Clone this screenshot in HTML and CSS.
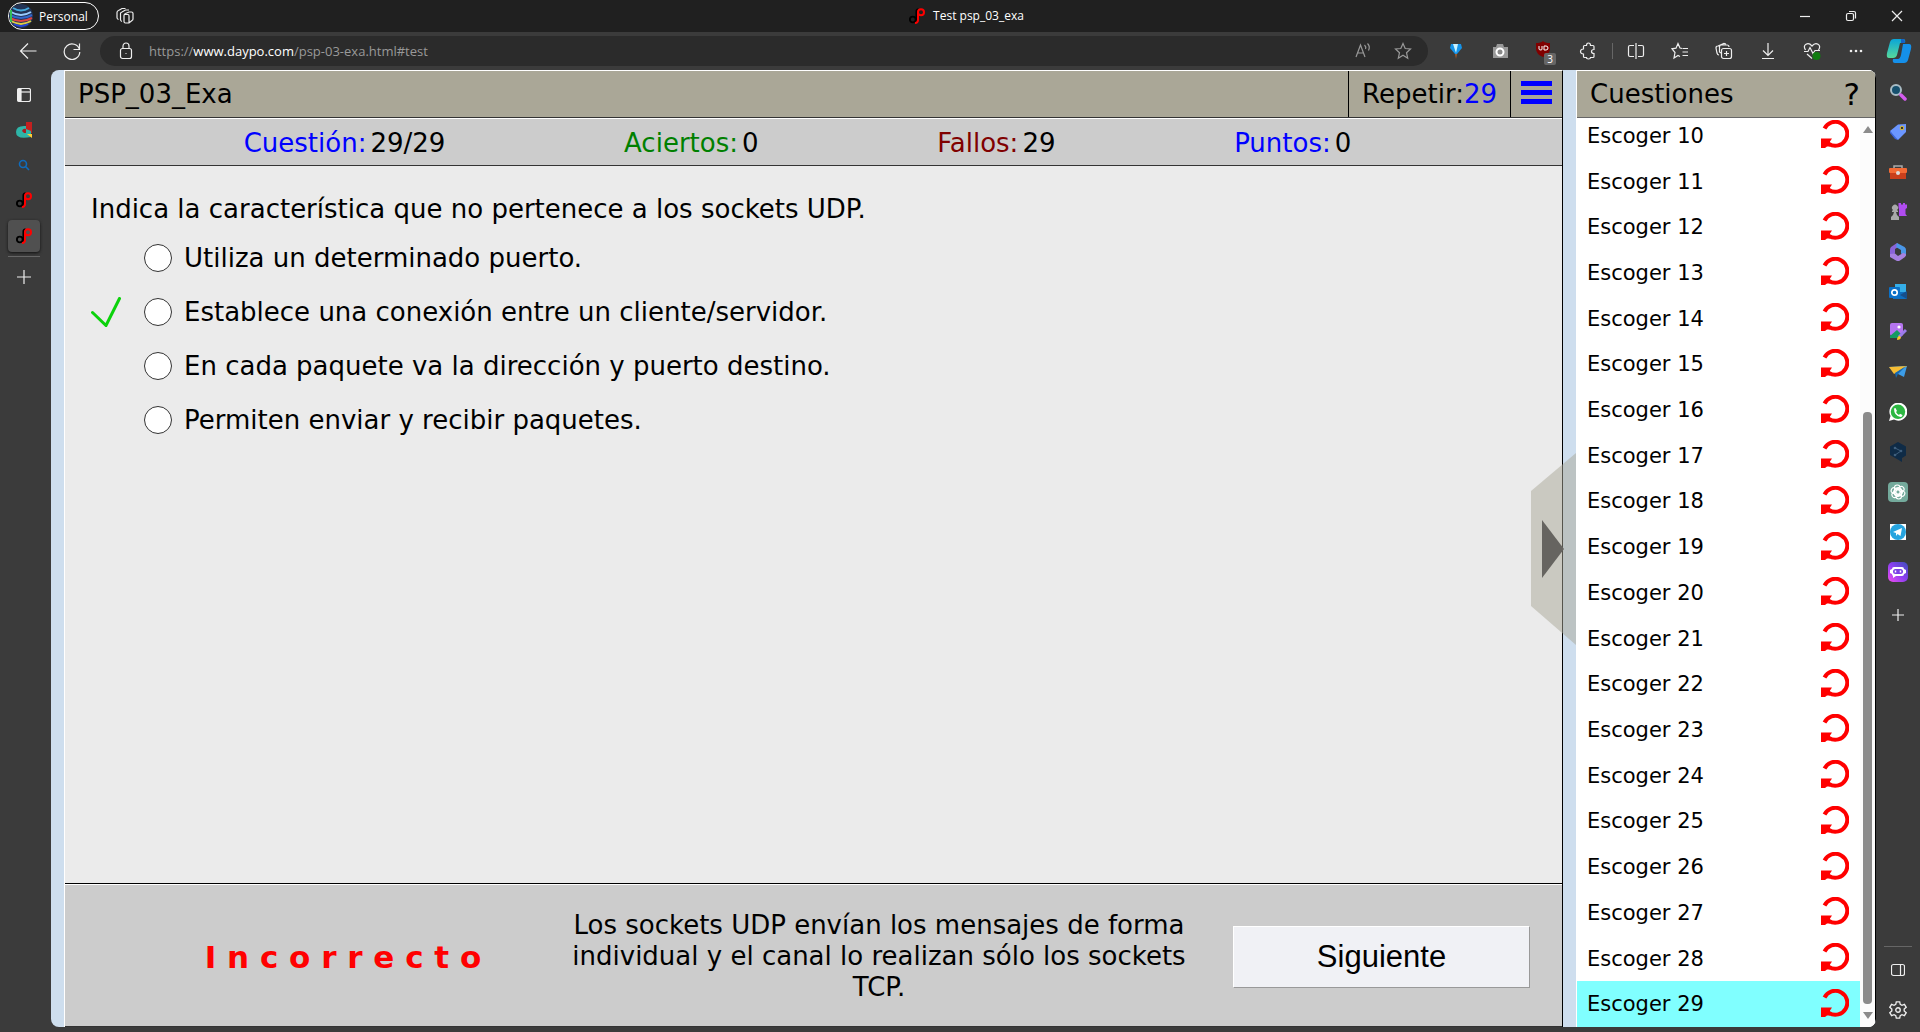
FILE: index.html
```html
<!DOCTYPE html>
<html lang="es">
<head>
<meta charset="utf-8">
<title>Test psp_03_exa</title>
<link rel="stylesheet" href="styles.css">
</head>
<body>
<svg class="sprite" aria-hidden="true">
  <symbol id="daypo" viewBox="0 0 16 16"><circle cx="3.800" cy="11.500" r="2.900" fill="none" stroke="#000" stroke-width="1.900"/><path d="M7.200 14V4Q7 1.500 9.500 1" fill="none" stroke="#000" stroke-width="1.500"/><circle cx="12" cy="4.200" r="3" fill="none" stroke="red" stroke-width="2"/><path d="M9 3.500V12q0 2.500-3 3.200" fill="none" stroke="red" stroke-width="2"/></symbol>
  <symbol id="retry" viewBox="0 0 28 28"><path d="M3.500 8.500A12 12 0 1 1 8 24" fill="none" stroke="red" stroke-width="4"/><path d="M0 18.500h11l-2 3v5H6l-2 1.500H0z" fill="red"/></symbol>
</svg>
<div class="window">
  <header class="titlebar">
    <button class="profile"><svg class="avatar" viewBox="0 0 24 24" aria-hidden="true"><circle cx="12" cy="12" r="12" fill="#235"/><g fill="none" stroke-width="2"><path d="M4 4q8 5 16 0" stroke="#4ad"/><path d="M2 8q10 6 20 0" stroke="#9cf"/><path d="M1 11q11 6 22 0" stroke="#36c"/><path d="M1 14q11 6 22 0" stroke="#d44"/><path d="M2 17q10 6 20 0" stroke="#dc4"/><path d="M5 20q7 4 14 0" stroke="#24d"/><path d="M2 6v12" stroke="#3b5"/></g></svg>Personal</button>
    <button class="icon" aria-label="Áreas de trabajo"><svg width="18" height="18" viewBox="0 0 18 18"><path d="M8 8.500Q8 7 9.500 6.500L13 5h2.500q1.500 0 1.500 1.500V12q0 1-1 1.500l-3 2.500H9.500Q8 16 8 14.500zM8.500 7.500H12q1 0 1 1.500v6.500M6 14.500Q4.500 14 4.500 12.500V6.500Q4.500 5.500 6 5L9.500 3H13M2.500 12.500Q1 12 1 10.500V5.500Q1 4 2.500 3.500L6 1.500H9.500"/></svg></button>
    <div class="tab-title"><svg width="16" height="16" aria-hidden="true"><use href="#daypo"/></svg>Test psp_03_exa</div>
    <div class="window-controls">
      <button class="icon" aria-label="Minimizar"><svg width="12" height="12" viewBox="0 0 12 12"><path d="M1 6.500h10"/></svg></button>
      <button class="icon" aria-label="Restaurar"><svg width="12" height="12" viewBox="0 0 12 12"><rect x="1.500" y="3.500" width="7" height="7" rx="1.500"/><path d="M4 1.500h5q1.500 0 1.500 1.500v5.500"/></svg></button>
      <button class="icon" aria-label="Cerrar"><svg width="12" height="12" viewBox="0 0 12 12"><path d="m1 1 10 10M11 1 1 11"/></svg></button>
    </div>
  </header>

  <nav class="toolbar">
    <div class="nav-buttons">
      <button class="icon" aria-label="Atrás"><svg width="18" height="18" viewBox="0 0 18 18"><path d="M17.500 9H1.500M9 1.500 1.500 9 9 16.500"/></svg></button>
      <button class="icon" aria-label="Actualizar"><svg width="18" height="18" viewBox="0 0 18 18"><path d="M16.500 7.500a7.800 7.800 0 1 0 .3 2.500M16.500 1.500v6h-6"/></svg></button>
    </div>
    <div class="address">
      <svg class="line" width="14" height="18" viewBox="0 0 14 18" aria-hidden="true"><rect x="1.500" y="6.500" width="11" height="10" rx="2"/><path d="M4 6.500V4a3 3 0 0 1 6 0v2.500M6.500 11.500h1"/></svg>
      <a class="url" href="#test">https://<b>www.daypo.com</b>/psp-03-exa.html#test</a>
      <button class="icon dim" aria-label="Leer en voz alta"><svg width="18" height="18" viewBox="0 0 18 18"><path d="m2 15 4.500-12L11 15M3.500 11h6M10.500 3q2 2 1 4M13.500 1.500q3 3 1 7"/></svg></button>
      <button class="icon dim" aria-label="Favorito"><svg width="18" height="18" viewBox="0 0 18 18"><path d="m9 1.500 2.200 5 5.300.5-4 3.700 1.200 5.500L9 13.300l-4.700 2.900 1.200-5.500-4-3.700 5.300-.5z"/></svg></button>
    </div>
    <div class="extensions">
      <button class="icon" aria-label="Extensión"><svg class="art" width="18" height="18" viewBox="0 0 18 18"><path d="M4 2h10l1 4-5 6H8L3 6z" fill="#1593e8"/><path d="M6 2h5l-2 9z" fill="#c9f2ff"/><path d="m8 12 1 5 1-5z" fill="#a65a26"/></svg></button>
      <button class="icon" aria-label="Captura"><svg class="art" width="18" height="18" viewBox="0 0 18 18"><path d="M2 5h3l1-3h6l1 3h4v11H2z" fill="#999"/><circle cx="9" cy="10" r="3.500" fill="#888" stroke="#fff" stroke-width="2"/></svg></button>
      <button class="icon" aria-label="uBlock"><svg class="art" width="22" height="22" viewBox="0 0 22 22"><path d="M3 3q5 0 7-2 2 2 7 2v6q0 5-7 8-7-3-7-8z" fill="#800000"/><path d="M6 6v3q0 1 2 1 1 0 1-1V6m2 4V6h2q2 0 2 2t-2 2z" fill="none" stroke="#fff"/></svg><span class="badge">3</span></button>
      <button class="icon" aria-label="Extensiones"><svg width="18" height="18" viewBox="0 0 18 18"><path d="M5.500 3.500H7.500Q7.500 1 9.500 1t2 2.500H14q1 0 1 1v3q-2.500 0-2.500 2t2.500 2v3q0 1-1 1H11.500Q11.500 17 9.500 17t-2-1.500h-2q-1 0-1-1V12Q1.500 12 1.500 9.500t3-2.500V4.500q0-1 1-1z"/></svg></button>
      <span class="divider"></span>
      <button class="icon" aria-label="Pantalla dividida"><svg width="18" height="18" viewBox="0 0 18 18"><path d="M7 3.500H3q-1.500 0-1.500 1.500v8q0 1.500 1.500 1.500h4M11 3.500h4q1.500 0 1.500 1.500v8q0 1.500-1.500 1.500h-4M9 1v16"/></svg></button>
      <button class="icon" aria-label="Favoritos"><svg width="18" height="18" viewBox="0 0 18 18"><path d="M11 6.500 9 6 7 1.500 5 6.200 1 6.800l3 3.700-1 5.500 4-2.500 2 1M11.500 6.500H17M11.500 10H17M11.500 13.500H17"/></svg></button>
      <button class="icon" aria-label="Colecciones"><svg width="18" height="18" viewBox="0 0 18 18"><rect x="6.500" y="6.500" width="10" height="10" rx="2"/><path d="M11.500 9v5M9 11.500h5M4 13Q2.500 13 2 11L1 6q0-2 2-2M6 11l-1.500-1V5q0-2 2-2H12q2 0 2 2M3 4l6-2.500 2 .5"/></svg></button>
      <button class="icon" aria-label="Descargas"><svg width="18" height="18" viewBox="0 0 18 18"><path d="M9 1v12M4 8.500 9 13.500l5-5M3 16.500h12"/></svg></button>
      <button class="icon" aria-label="Rendimiento"><svg width="18" height="18" viewBox="0 0 18 18"><path d="M2.500 8Q0 4 3 2.300T9 4q3-3.500 6-1.700T15.500 8M1 9.500h4l2-4 3 6 2-3h5M4 12l5 4.500"/><circle class="solid" cx="13.500" cy="14" r="4" fill="#107c10" stroke="none"/></svg></button>
      <button class="icon" aria-label="Más"><svg class="art" width="18" height="18" viewBox="0 0 18 18" fill="#eee"><circle cx="4" cy="9" r="1.300"/><circle cx="9" cy="9" r="1.300"/><circle cx="14" cy="9" r="1.300"/></svg></button>
    </div>
    <button class="icon copilot" aria-label="Copilot"><svg class="art" width="26" height="26" viewBox="0 0 26 26"><defs><linearGradient id="cp" x1="0" y1="0" x2="0" y2="1"><stop stop-color="#0aa5d8"/><stop offset="1" stop-color="#57d99a"/></linearGradient></defs><path d="M8 1h9q3 0 2 4l-5 0-3 12q-1 3-4 3H3q-3 0-2-5L4 4q1-3 4-3z" fill="url(#cp)"/><path d="M17 6h6q3 0 2 5l-3 11q-1 3-4 3H9q-3 0-2-4h5q2 0 3-4z" fill="#1590ea"/><path d="M15 1h2q2 0 2 4h-4z" fill="#1460c8"/></svg></button>
  </nav>

  <div class="workspace">
    <aside class="rail tabs">
      <button class="icon" aria-label="Pestañas"><svg width="14" height="14" viewBox="0 0 14 14"><rect x=".5" y=".5" width="13" height="13" rx="2"/><path d="M.500 4h13"/><path d="M1 1h3v12H1z" fill="#eee"/></svg></button>
      <button class="icon" aria-label="Pestaña"><svg class="art" width="16" height="16" viewBox="0 0 16 16"><path d="M10 0h6v11h-6z" fill="#c3201f"/><path d="M0 10q0-6 8-6h2v3l5 2v6q-15 3-15-5z" fill="#2eb5a8"/><path d="M6 9q1-3 4-2v4H8z" fill="#a81d20"/><path d="M11 12h5v4z" fill="#fc3"/></svg></button>
      <button class="icon" aria-label="Búsqueda"><svg class="art" width="12" height="12" viewBox="0 0 12 12"><g fill="none" stroke="#0f6cbd" stroke-width="1.600"><circle cx="5" cy="5" r="3.500"/><path d="m7.500 7.500 3.500 3.500"/></g></svg></button>
      <button class="icon" aria-label="Daypo"><svg class="art" width="16" height="16"><use href="#daypo"/></svg></button>
      <button class="icon active" aria-label="Test psp_03_exa"><svg class="art" width="16" height="16"><use href="#daypo"/></svg></button>
      <span class="rule"></span>
      <button class="icon" aria-label="Nueva pestaña"><svg width="14" height="14" viewBox="0 0 14 14"><path d="M7 0v14M0 7h14"/></svg></button>
    </aside>

    <div class="page">
      <main class="test">
        <header class="test-head">
          <h1>PSP_03_Exa</h1>
          <div class="repeat">Repetir:<a href="#repetir">29</a></div>
          <button class="menu" aria-label="Menú"><span></span><span></span><span></span></button>
        </header>
        <div class="stats">
          <div class="stat blue">Cuestión:<b>29/29</b></div>
          <div class="stat green">Aciertos:<b>0</b></div>
          <div class="stat maroon">Fallos:<b>29</b></div>
          <div class="stat blue">Puntos:<b>0</b></div>
        </div>
        <section class="question">
          <h2>Indica la característica que no pertenece a los sockets UDP.</h2>
          <div class="option"><span class="mark"></span><input type="radio" name="r" id="r1"><label for="r1">Utiliza un determinado puerto.</label></div>
          <div class="option"><span class="mark"><svg width="30" height="30" viewBox="0 0 30 30" aria-label="Correcta"><path d="M1.500 15.500 15 28.500 28.500 1.500" fill="none" stroke="#0bd20b" stroke-width="3" stroke-linecap="round"/></svg></span><input type="radio" name="r" id="r2"><label for="r2">Establece una conexión entre un cliente/servidor.</label></div>
          <div class="option"><span class="mark"></span><input type="radio" name="r" id="r3"><label for="r3">En cada paquete va la dirección y puerto destino.</label></div>
          <div class="option"><span class="mark"></span><input type="radio" name="r" id="r4"><label for="r4">Permiten enviar y recibir paquetes.</label></div>
        </section>
        <footer class="result">
          <strong>I n c o r r e c t o</strong>
          <p>Los sockets UDP envían los mensajes de forma individual y el canal lo realizan sólo los sockets TCP.</p>
          <button class="next">Siguiente</button>
        </footer>
      </main>
      <div class="gutter">
        <button class="collapse" aria-label="Ocultar cuestiones"><svg width="45" height="192" viewBox="0 0 45 192"><path d="M0 38 45 0v192L0 153z" fill="#aaa797" fill-opacity=".5"/><path d="M11 67v58l22-29z" fill="#666460"/></svg></button>
      </div>
      <aside class="questions">
        <header class="questions-head"><h2>Cuestiones</h2><a href="#ayuda">?</a></header>
        <div class="list-area">
          <ol>
            <li>Escoger 10<svg><use href="#retry"/></svg></li>
            <li>Escoger 11<svg><use href="#retry"/></svg></li>
            <li>Escoger 12<svg><use href="#retry"/></svg></li>
            <li>Escoger 13<svg><use href="#retry"/></svg></li>
            <li>Escoger 14<svg><use href="#retry"/></svg></li>
            <li>Escoger 15<svg><use href="#retry"/></svg></li>
            <li>Escoger 16<svg><use href="#retry"/></svg></li>
            <li>Escoger 17<svg><use href="#retry"/></svg></li>
            <li>Escoger 18<svg><use href="#retry"/></svg></li>
            <li>Escoger 19<svg><use href="#retry"/></svg></li>
            <li>Escoger 20<svg><use href="#retry"/></svg></li>
            <li>Escoger 21<svg><use href="#retry"/></svg></li>
            <li>Escoger 22<svg><use href="#retry"/></svg></li>
            <li>Escoger 23<svg><use href="#retry"/></svg></li>
            <li>Escoger 24<svg><use href="#retry"/></svg></li>
            <li>Escoger 25<svg><use href="#retry"/></svg></li>
            <li>Escoger 26<svg><use href="#retry"/></svg></li>
            <li>Escoger 27<svg><use href="#retry"/></svg></li>
            <li>Escoger 28<svg><use href="#retry"/></svg></li>
            <li class="current">Escoger 29<svg><use href="#retry"/></svg></li>
          </ol>
          <div class="scrollbar" aria-hidden="true"><i class="up"></i><span class="track"></span><span class="thumb"></span><i class="down"></i></div>
        </div>
      </aside>
    </div>

    <aside class="rail apps">
      <button class="icon" aria-label="Buscar"><svg class="art" width="18" height="18" viewBox="0 0 18 18"><circle cx="7" cy="7" r="5" fill="#16506e" stroke="#a9bcc5" stroke-width="2"/><path d="m12 12 4 4" stroke="#d55cf0" stroke-width="3.500" stroke-linecap="round"/></svg></button>
      <button class="icon" aria-label="Compras"><svg class="art" width="18" height="18" viewBox="0 0 18 18"><path d="M1 8 9 1.500 17 1v8L9 17 6 15z" fill="#6b96ff"/><path d="m1 8 8 9-3-1-5-6z" fill="#3d64d8"/><circle cx="13" cy="5" r="1.800" fill="#333" stroke="#e6c229"/></svg></button>
      <button class="icon" aria-label="Herramientas"><svg class="art" width="18" height="18" viewBox="0 0 18 18"><path d="M5 6V3h8v3" fill="none" stroke="#aaa" stroke-width="1.500"/><rect y="5" width="18" height="5" rx="1" fill="#f36a35"/><path d="M1 10h16v6H1z" fill="#c93f1c"/><circle cx="9" cy="10" r="2" fill="#ddd"/></svg></button>
      <button class="icon" aria-label="Juegos"><svg class="art" width="18" height="18" viewBox="0 0 18 18"><path d="M9.500 0H12v1.500h2V0h2v1.500h2V5l-1.500 1v5L18 13h-8V6L9.500 5z" fill="#b04cf0"/><path d="M2 17v-3l2-2 1-3H3V8l1-1a3 3 0 1 1 4 0l1 1v1H7l1 3 2 2v3z" fill="#a9a9a9"/></svg></button>
      <button class="icon" aria-label="Microsoft 365"><svg class="art" width="18" height="18" viewBox="0 0 18 18"><path d="M8 0 2 4Q1 5 1 7v6l5-2.500V6l5-3z" fill="#8a63d8"/><path d="m8 0 7.500 4Q17 5 17 7v6l-5-2.500V7L7 4z" fill="#4a97e8"/><path d="M17 11q0 2-1 3l-5 3.500q-2 1-4 0L1 14v-3l5-.500 3 2.500 5-3z" fill="#a781e0"/></svg></button>
      <button class="icon" aria-label="Outlook"><svg class="art" width="18" height="18" viewBox="0 0 18 18"><path d="M6 1h11v9H6z" fill="#35aee8"/><path d="M4 9h14v7H4z" fill="#0f6fc0"/><path d="m11 12 7-4v8z" fill="#164f8b"/><rect y="4" width="11" height="11" rx="1" fill="#0b71c8"/><circle cx="5.500" cy="9.500" r="2.700" fill="none" stroke="#fff" stroke-width="1.700"/></svg></button>
      <button class="icon" aria-label="Imágenes"><svg class="art" width="18" height="18" viewBox="0 0 18 18"><rect x="1" width="13" height="13" rx="2" fill="#b575f0"/><circle cx="10" cy="4" r="1.600" fill="#fff"/><path d="m1 13 7-6 5 5-4 3H1z" fill="#169b61"/><path d="m17 7-7 7" stroke="#9b7bea" stroke-width="3"/><path d="M8 17q0-4 3-4l1 2q-1 2-4 2z" fill="#ffc928"/></svg></button>
      <button class="icon" aria-label="Drop"><svg class="art" width="18" height="18" viewBox="0 0 18 18"><path d="m0 4 18-1-3 11-6-3z" fill="#3c9de8"/><path d="m0 4 18-1L5 11z" fill="#f6bd34"/><path d="m6 10 11-7-8 8-2 4z" fill="#1768b0"/></svg></button>
      <button class="icon" aria-label="WhatsApp"><svg class="art" width="18" height="18" viewBox="0 0 18 18"><path d="M0 18 1.500 13A9 9 0 1 1 5 16.500z" fill="#fff"/><circle cx="9" cy="8.800" r="7.200" fill="#2cb742"/><path d="M5 5.500 6.500 5 8 8l-1 1q1 2 3 3l1-1.200 2.500 1.200q0 2-2 2Q5 13 5 5.500z" fill="#fff"/></svg></button>
      <button class="icon" aria-label="DeepL"><svg class="art" width="18" height="20" viewBox="0 0 18 20"><path d="m9 0 8 4.500v9L13 16v4l-5-3-7-4V4.500z" fill="#0f2b46"/><path d="m6 6 6 3-6 4" fill="none" stroke="#3f5f7d"/><g fill="#3f5f7d"><circle cx="6" cy="6" r="1.300"/><circle cx="12" cy="9" r="1.300"/><circle cx="6" cy="13" r="1.300"/></g></svg></button>
      <button class="icon" aria-label="ChatGPT"><svg class="art" width="20" height="20" viewBox="0 0 20 20"><rect width="20" height="20" rx="4" fill="#74aa9c"/><g fill="none" stroke="#fff" stroke-width="1.100"><rect x="6.500" y="3" width="5.500" height="11" rx="2.700"/><rect x="6.500" y="3" width="5.500" height="11" rx="2.700" transform="rotate(60 10 10)"/><rect x="6.500" y="3" width="5.500" height="11" rx="2.700" transform="rotate(120 10 10)"/><rect x="6.500" y="3" width="5.500" height="11" rx="2.700" transform="rotate(180 10 10)"/><rect x="6.500" y="3" width="5.500" height="11" rx="2.700" transform="rotate(240 10 10)"/><rect x="6.500" y="3" width="5.500" height="11" rx="2.700" transform="rotate(300 10 10)"/></g></svg></button>
      <button class="icon" aria-label="Telegram"><svg class="art" width="16" height="16" viewBox="0 0 16 16"><path d="M0 0h16v16H0z" fill="#fff"/><circle cx="8" cy="8" r="8" fill="#27a4df"/><path d="m3 8 9-4-1.500 8-3-2L6 12V9z" fill="#fff"/></svg></button>
      <button class="icon" aria-label="Poe"><svg class="art" width="20" height="20" viewBox="0 0 20 20"><defs><linearGradient id="poe" x1="0" y1="1" x2="1" y2="0"><stop stop-color="#f24df0"/><stop offset=".5" stop-color="#8b3ff0"/><stop offset="1" stop-color="#3c4eb8"/></linearGradient></defs><rect width="20" height="20" rx="5" fill="url(#poe)"/><path d="M6 5h8q2 0 2 2l2 1v3l-2 1q0 2-2 2H8l-3 2v-2q-1-1-1-2l-2-1V8l2-1q0-2 2-2z" fill="#fff"/><rect x="5" y="7" width="10" height="5" rx="2.500" fill="#7a3fe6"/><path d="M7.500 8.500v2M12.500 8.500v2" stroke="#fff" stroke-width="1.500"/></svg></button>
      <button class="icon add" aria-label="Añadir"><svg width="12" height="12" viewBox="0 0 12 12"><path d="M6 0v12M0 6h12"/></svg></button>
      <span class="spacer"></span>
      <span class="rule"></span>
      <button class="icon" aria-label="Barra lateral"><svg width="14" height="14" viewBox="0 0 14 14"><rect x=".5" y="1.500" width="13" height="11" rx="2"/><path d="M9.500 1.500v11"/></svg></button>
      <button class="icon" aria-label="Configuración"><svg width="18" height="18" viewBox="0 0 16 16"><path d="M6.500.800h3l.5 2.200 1.500.8 2.200-.8 1.600 2.600-1.800 1.600v1.600l1.800 1.600-1.600 2.600-2.200-.8-1.500.8-.5 2.200h-3L6 13l-1.500-.8-2.200.8L.700 10.400l1.800-1.600V7.200L.700 5.600 2.300 3l2.200.8L6 3z"/><circle cx="8" cy="8" r="2"/></svg></button>
    </aside>
  </div>
</div>
</body>
</html>
```
FILE: styles.css
```css
* { box-sizing: border-box; }
body { margin: 0; background: #3b3b3b; }
button { border: 0; background: none; padding: 0; color: inherit; font: inherit; }
a { text-decoration: none; color: inherit; }
h1, h2, p, ol { margin: 0; padding: 0; font-weight: normal; }
.sprite { display: none; }
.window { display: flex; flex-direction: column; height: 100vh; font: 12px "Open Sans", "Noto Sans", sans-serif; color: #fff; }

.icon { display: flex; align-items: center; justify-content: center; flex: none; position: relative; }
.icon svg:not(.art), .line { fill: none; stroke: #eee; stroke-width: 1.2; }
.icon.dim svg:not(.art) { stroke: #999; }

/* Title bar */
.titlebar { position: relative; display: flex; align-items: center; flex: none; height: 32px; padding-left: 8px; background: #202020; }
.profile { display: flex; align-items: center; gap: 6px; width: 91px; height: 28px; border: 1px solid #fff; border-radius: 14px; }
.avatar { width: 24px; height: 24px; }
.titlebar > .icon { width: 52px; }
.tab-title { display: flex; align-items: center; gap: 8px; margin: 0 auto; line-height: 34px; }
.window-controls { display: flex; }
.window-controls .icon { width: 46px; height: 32px; }

/* Toolbar */
.toolbar { display: flex; align-items: center; flex: none; height: 38px; }
.nav-buttons { display: flex; width: 100px; padding-left: 6px; }
.nav-buttons .icon { width: 44px; }
.address { display: flex; align-items: center; flex: 1; height: 30px; padding: 0 5px 0 19px; border-radius: 15px; background: #2b2b2b; }
.address .icon { width: 40px; }
.url { flex: 1; padding-left: 16px; font-size: 13px; color: #999; }
.url b { font-weight: normal; color: #fff; }
.extensions { display: flex; align-items: center; padding-left: 6px; }
.extensions .icon { width: 44px; height: 30px; }
.divider { width: 1px; height: 16px; margin: 0 1px 0 2px; background: #666; }
.badge { position: absolute; right: 10px; bottom: 1px; width: 12px; border-radius: 2px; background: #666; font-size: 10px; line-height: 12px; }
.copilot { width: 42px; }

/* Side rails */
.workspace { display: flex; flex: 1; min-height: 0; padding-bottom: 5px; }
.rail { display: flex; flex-direction: column; align-items: center; flex: none; }
.tabs { width: 51px; padding: 7px 3px 0 0; }
.tabs .icon { width: 32px; height: 35px; }
.tabs .icon.active { height: 32px; margin: 3px 0 4px; border-radius: 4px; background: #505050; box-shadow: 0 1px 3px #111; }
.rule { width: 32px; height: 1px; background: #666; }
.tabs .rule + .icon { height: 40px; }
.apps { width: 44px; padding-top: 2px; margin-bottom: -3px; }
.apps .icon { width: 40px; height: 40px; }
.apps .add { height: 46px; }
.spacer { flex: 1; }
.apps .rule { width: 28px; margin-bottom: 3px; }

/* Page */
.page { display: flex; flex: 1; min-width: 0; overflow: hidden; border-radius: 8px; padding-left: 13px; background: #cedeee; color: #000; font: 26px "DejaVu Sans", Verdana, sans-serif; }
.test { display: flex; flex-direction: column; flex: 1; min-width: 0; border: solid #fff; border-width: 1px 0 0 1px; border-right: 1px solid #000; }
.test h1, .test h2, .questions h2 { font-size: 26px; }
.test-head { display: flex; flex: none; height: 47px; line-height: 46px; background: #aaa797; border-bottom: 1px solid #333; }
.test-head h1 { flex: 1; padding-left: 13px; }
.repeat { padding: 0 13px; border-left: 1px solid #000; }
.repeat a, .blue { color: #00f; }
.green { color: green; }
.maroon { color: maroon; }
.menu { display: flex; flex-direction: column; align-items: center; justify-content: center; gap: 4px; width: 52px; padding-bottom: 4px; border-left: 1px solid #000; }
.menu span { width: 31px; height: 5px; background: #00f; }
.stats { display: flex; justify-content: space-evenly; flex: none; height: 48px; padding-right: 32px; line-height: 48px; border-top: 1px solid #fff; border-bottom: 1px solid #333; background: #ccc; }
.stat { display: flex; gap: 4px; }
.stat b { font-weight: normal; color: #000; }
.question { flex: 1; padding: 27px 26px; background: #ebebeb; }
.question h2 { line-height: 32px; margin-bottom: 6px; }
.option { display: flex; align-items: center; height: 54px; }
.mark { display: flex; width: 53px; }
.option input { appearance: none; flex: none; width: 28px; height: 28px; margin: 0 12px 0 0; border: 1px solid #333; border-radius: 50%; background: #fff; }
.result { display: grid; grid-template-columns: 1fr 650px 329px; column-gap: 29px; align-items: center; flex: none; height: 144px; padding-top: 3px; border-top: 1px solid #000; border-bottom: 1px solid #333; background: #ccc; box-shadow: inset 0 1px #fff; text-align: center; }
.result { column-gap: 0; grid-template-columns: 1fr 708px 329px; }
.result strong { padding-left: 96px; color: red; font-size: 31px; white-space: nowrap; }
.result p { padding: 0 29px; line-height: 31px; }
.next { justify-self: start; width: 297px; height: 62px; border: 1px solid; border-color: #fff #999 #999 #fff; background: #f0f1f5; font: 31px "Liberation Sans", Arial, sans-serif; }

.gutter { position: relative; flex: none; width: 13px; }
.collapse { position: absolute; right: 0; top: 50%; margin-top: -96px; width: 45px; height: 192px; }
.collapse svg { display: block; }

.questions { display: flex; flex-direction: column; flex: none; width: 300px; border: solid #fff; border-width: 1px 0 0 1px; border-right: 1px solid #000; background: #fff; }
.questions-head { display: flex; justify-content: space-between; flex: none; height: 47px; padding: 0 15px 0 13px; line-height: 46px; background: #aaa797; border-bottom: 1px solid #666; }
.questions-head a { font-size: 31px; }
.list-area { display: flex; align-items: flex-end; flex: 1; min-height: 0; overflow: hidden; }
.list-area ol { display: flex; flex-direction: column; flex: 1; height: calc(100% + 5px); list-style: none; font-size: 21px; }
.list-area li { display: flex; align-items: center; justify-content: space-between; flex: 1; padding: 0 11px 0 10px; }
.list-area li svg { width: 28px; height: 28px; margin-bottom: 3px; }
.current { background: #80ffff; }
.scrollbar { display: flex; flex-direction: column; align-items: center; width: 15px; height: 100%; padding: 8px 0; background: #fcfcfc; }
.track { flex: 278; }
.thumb { flex: 590; width: 9px; border-radius: 4px; background: #8b8b8b; }
.up, .down { border: solid transparent; border-width: 0 5px; }
.up { border-bottom: 7px solid #8b8b8b; }
.down { margin-top: 8px; border-top: 7px solid #8b8b8b; }
```
